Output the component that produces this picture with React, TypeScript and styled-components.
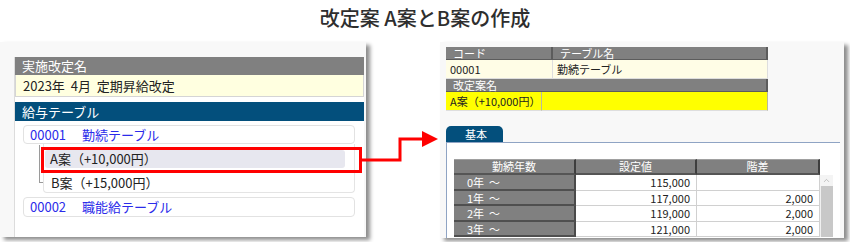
import React from 'react';
import styled, { createGlobalStyle } from 'styled-components';
import { ChevronUp } from 'lucide-react';

const GlobalStyle = createGlobalStyle`
  html, body {
    margin: 0;
    padding: 0;
    background: #ffffff;
  }
  body {
    font-family: "Noto Sans CJK JP", "Noto Sans", sans-serif;
    color: #222;
  }
  * {
    box-sizing: border-box;
  }
`;

const Page = styled.div`
  width: 850px;
  height: 242px;
  overflow: hidden;
  display: flex;
  flex-direction: column;
`;

const Title = styled.h1`
  margin: 0;
  height: 42px;
  padding-bottom: 8px;
  display: flex;
  align-items: center;
  justify-content: center;
  font-size: 20px;
  font-weight: 500;
  color: #2e2e2e;
`;

const Stage = styled.div`
  position: relative;
  flex: 1;
  display: flex;
  align-items: flex-start;
`;

const Screen = styled.div<{ $width: number; $height: number; $offset?: number }>`
  width: ${p => p.$width}px;
  height: ${p => p.$height}px;
  margin-left: ${p => p.$offset || 0}px;
  background: #f8f8f8;
  box-shadow: 4px 3px 4px rgba(0, 0, 0, 0.45);
  overflow: hidden;
  display: flex;
  flex-direction: column;
`;

/* ---------- left screen ---------- */

const LeftScreen = styled(Screen)`
  padding: 15px 2px 0 14px;
`;

const LeftInner = styled.div`
  flex: 1;
  background: #fff;
  border-left: 1px solid #dcdcdc;
  display: flex;
  flex-direction: column;
`;

const Bar = styled.div<{ $bg: string; $top?: number }>`
  height: ${p => (p.$bg === 'navy' ? 19 : 18)}px;
  margin-top: ${p => p.$top || 0}px;
  background: ${p => (p.$bg === 'navy' ? '#034f7c' : '#808080')};
  color: #fff;
  font-size: 13px;
  line-height: ${p => (p.$bg === 'navy' ? 19 : 18)}px;
  padding-left: 7px;
`;

const NameRow = styled.div`
  height: 22px;
  background: #ffffe0;
  border: 1px solid #d5d5d5;
  border-top: none;
  font-size: 13px;
  line-height: 21px;
  padding-left: 7px;
  white-space: pre;
  color: #222;
`;

const TreeList = styled.div`
  display: flex;
  flex-direction: column;
  padding: 4px 9px 0 8px;
`;

const TableItem = styled.div<{ $top?: number }>`
  height: ${p => (p.$top ? 20 : 19)}px;
  margin-top: ${p => p.$top || 0}px;
  border: 1px solid #e2e2e2;
  border-radius: 4px;
  color: #2b2bea;
  font-size: 13px;
  line-height: 17px;
  padding-left: 6px;
  display: flex;
  gap: 16px;
`;

const SubRow = styled.div`
  display: flex;
  height: 49px;
`;

const TreeCol = styled.div`
  width: 20px;
  padding: 1px 0 0 16px;
`;

const Elbow = styled.div`
  width: 4px;
  height: 38px;
  border-left: 1px solid #9a9a9a;
  border-bottom: 1px solid #9a9a9a;
`;

const SubBox = styled.div`
  flex: 1;
  border: 1px solid #e4e4e4;
  border-top: none;
  border-radius: 0 0 4px 4px;
  padding: 6px 9px 0 1px;
  display: flex;
  flex-direction: column;
  gap: 6px;
`;

const PlanRow = styled.div<{ $active?: boolean }>`
  height: 18px;
  background: ${p => (p.$active ? '#e7e7ef' : 'transparent')};
  border-radius: 3px;
  padding-left: ${p => (p.$active ? 5 : 6)}px;
  font-size: 13px;
  line-height: 18px;
  color: #222;
`;

/* ---------- right screen ---------- */

const RightScreen = styled(Screen)`
  padding: 5px 4px 0 6px;
`;

const InfoGrid = styled.div<{ $cols: string }>`
  width: 322px;
  display: grid;
  grid-template-columns: ${p => p.$cols};
`;

const InfoHead = styled.div<{ $span?: boolean }>`
  grid-column: ${p => (p.$span ? '1 / span 2' : 'auto')};
  height: 13px;
  background: #808080;
  box-shadow: inset -2px -1px 0 #5c5c5c;
  color: #fff;
  font-size: 11px;
  line-height: 13px;
  padding-left: 7px;
`;

const InfoCell = styled.div<{ $yellow?: boolean }>`
  height: 19px;
  background: ${p => (p.$yellow ? '#ffff00' : '#fffde6')};
  border-right: 1px solid ${p => (p.$yellow ? '#b8b8a0' : '#dedede')};
  border-bottom: 1px solid #dedede;
  font-size: 11px;
  line-height: 18px;
  padding-left: 4px;
  color: #222;
`;

const TabStrip = styled.div`
  margin-top: 15px;
  display: flex;
`;

const Tab = styled.div`
  width: 57px;
  height: 16px;
  background: #034f7c;
  border-radius: 5px 5px 0 0;
  color: #fff;
  font-size: 11px;
  line-height: 16px;
  padding-left: 19px;
`;

const TabBody = styled.div`
  flex: 1;
  border-top: 1px solid #8fa4c4;
  border-left: 1px solid #8fa4c4;
  background: #fff;
  padding: 16px 0 0 7px;
`;

const ValueTable = styled.div`
  display: grid;
  grid-template-columns: 122px 121px 123px 13px;
  grid-template-rows: 16px repeat(4, 15.5px);
`;

const ColHead = styled.div`
  background: #808080;
  border-top: 1px solid #a0a0a0;
  border-right: 2px solid #3e3e3e;
  border-bottom: 2px solid #555;
  color: #fff;
  font-size: 11px;
  line-height: 13px;
  text-align: center;
`;

const RowHead = styled.div<{ $row: number }>`
  grid-row: ${p => p.$row};
  grid-column: 1;
  background: #808080;
  border-right: 2px solid #4a4a4a;
  border-bottom: 2px solid #4f4f4f;
  color: #fff;
  font-size: 11px;
  line-height: 14px;
  padding-left: 13px;
  white-space: pre;
`;

const ValueCell = styled.div<{ $row: number; $col: number }>`
  grid-row: ${p => p.$row};
  grid-column: ${p => p.$col};
  background: #fff;
  border-right: 1px solid #d0d0d0;
  border-bottom: 1px solid #d0d0d0;
  font-size: 11px;
  line-height: 14px;
  text-align: right;
  padding-right: 6px;
  color: #222;
`;

const Scrollbar = styled.div`
  grid-column: 4;
  grid-row: 2 / span 4;
  display: flex;
  flex-direction: column;
  background: #f0f0f0;
`;

const ScrollButton = styled.div`
  height: 11px;
  display: flex;
  align-items: center;
  justify-content: center;
  color: #9a9a9a;
  background: #f4f4f4;
`;

const ScrollThumb = styled.div`
  flex: 1;
  background: #c8c8c8;
  margin-left: 1px;
`;

const Overlay = styled.svg`
  position: absolute;
  left: 0;
  top: 0;
  pointer-events: none;
`;

const rows = [
  { year: '0年  ～', value: '115,000', diff: '' },
  { year: '1年  ～', value: '117,000', diff: '2,000' },
  { year: '2年  ～', value: '119,000', diff: '2,000' },
  { year: '3年  ～', value: '121,000', diff: '2,000' },
];

const App = () => (
  <Page>
    <GlobalStyle />
    <Title>改定案 A案とB案の作成</Title>
    <Stage>
      <LeftScreen $width={366} $height={195}>
        <LeftInner>
          <Bar $bg="gray">実施改定名</Bar>
          <NameRow>{'2023年  4月  定期昇給改定'}</NameRow>
          <Bar $bg="navy" $top={5}>給与テーブル</Bar>
          <TreeList>
            <TableItem>
              <span>00001</span>
              <span>勤続テーブル</span>
            </TableItem>
            <SubRow>
              <TreeCol>
                <Elbow />
              </TreeCol>
              <SubBox>
                <PlanRow $active>A案（+10,000円）</PlanRow>
                <PlanRow>B案（+15,000円）</PlanRow>
              </SubBox>
            </SubRow>
            <TableItem $top={4}>
              <span>00002</span>
              <span>職能給テーブル</span>
            </TableItem>
          </TreeList>
        </LeftInner>
      </LeftScreen>

      <RightScreen $width={404} $height={196} $offset={74}>
        <InfoGrid $cols="107px 215px">
          <InfoHead>コード</InfoHead>
          <InfoHead>テーブル名</InfoHead>
          <InfoCell>00001</InfoCell>
          <InfoCell>勤続テーブル</InfoCell>
          <InfoHead $span>改定案名</InfoHead>
        </InfoGrid>
        <InfoGrid $cols="96px 226px">
          <InfoCell $yellow>A案（+10,000円）</InfoCell>
          <InfoCell $yellow />
        </InfoGrid>
        <TabStrip>
          <Tab>基本</Tab>
        </TabStrip>
        <TabBody>
          <ValueTable>
            <ColHead>勤続年数</ColHead>
            <ColHead>設定値</ColHead>
            <ColHead>階差</ColHead>
            <div />
            {rows.map((r, i) => (
              <React.Fragment key={i}>
                <RowHead $row={i + 2}>{r.year}</RowHead>
                <ValueCell $row={i + 2} $col={2}>{r.value}</ValueCell>
                <ValueCell $row={i + 2} $col={3}>{r.diff}</ValueCell>
              </React.Fragment>
            ))}
            <Scrollbar>
              <ScrollButton>
                <ChevronUp size={9} strokeWidth={1.5} />
              </ScrollButton>
              <ScrollThumb />
            </Scrollbar>
          </ValueTable>
        </TabBody>
      </RightScreen>

      <Overlay width={850} height={200} viewBox="0 0 850 200">
        <rect x={42.5} y={106.5} width={318} height={23} fill="none" stroke="#ff0000" strokeWidth={3} />
        <polyline points="362,118 400,118 400,97 424,97" fill="none" stroke="#ff0000" strokeWidth={3} />
        <polygon points="422,89 438,97 422,105" fill="#ff0000" />
      </Overlay>
    </Stage>
  </Page>
);

export default App;
